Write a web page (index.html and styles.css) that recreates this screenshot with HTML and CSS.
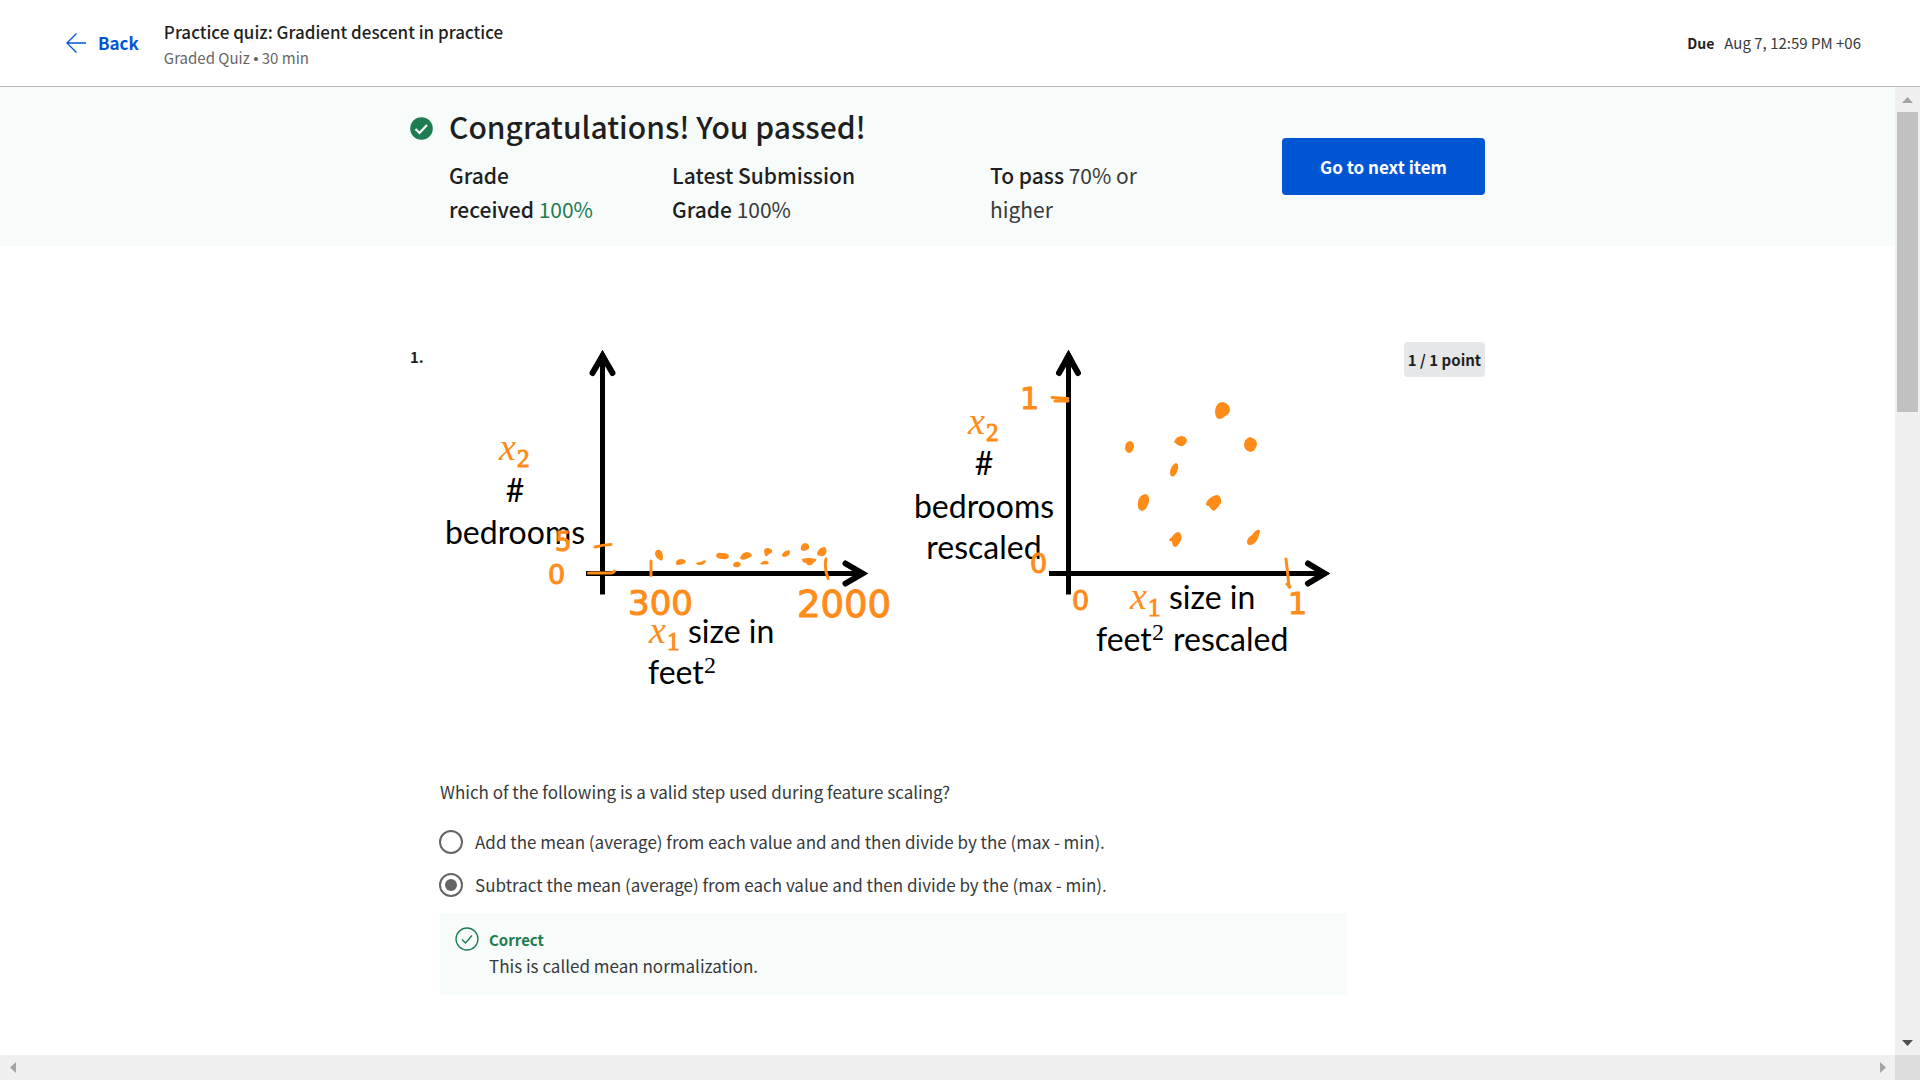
FILE: index.html
```html
<!DOCTYPE html>
<html lang="en">
<head>
<meta charset="utf-8">
<meta name="viewport" content="width=device-width, initial-scale=1">
<title>Practice quiz: Gradient descent in practice</title>
<link rel="stylesheet" href="styles.css">
</head>
<body>
<div class="app">
  <header class="topbar">
    <a class="back" href="#">
      <svg width="20" height="22" viewBox="0 0 20 22" aria-hidden="true"><path d="M10.500 1.500 1 11l9.500 9.500M1 11h19" fill="none" stroke="currentColor" stroke-width="1.300"/></svg>
      Back
    </a>
    <div class="topbar-info">
      <h1 class="quiz-title">Practice quiz: Gradient descent in practice</h1>
      <p class="quiz-meta">Graded Quiz <span class="bullet">•</span> 30 min</p>
    </div>
    <p class="due"><strong>Due</strong><span>Aug 7, 12:59 PM +06</span></p>
  </header>

  <div class="viewport">
    <main class="content">
      <section class="banner">
        <div class="banner-inner">
          <svg class="passed-icon" width="23" height="23" viewBox="0 0 23 23" aria-hidden="true"><circle cx="11.500" cy="11.500" r="11.300" fill="#1d7c50"/><path d="m5.500 12 4 4 7.500-8" fill="none" stroke="#fff" stroke-width="2.200"/></svg>
          <div class="result">
            <h2 class="result-title">Congratulations! You passed!</h2>
            <div class="grades">
              <p><b>Grade<br>received</b> <span class="good">100%</span></p>
              <p><b>Latest Submission<br>Grade</b> 100%</p>
              <p><b>To pass</b> 70% or<br>higher</p>
            </div>
          </div>
          <button class="next" type="button">Go to next item</button>
        </div>
      </section>

      <section class="question">
        <span class="number">1.</span>
        <div class="body">
          <svg class="figure" viewBox="440 340 907 360" role="img" aria-label="Number of bedrooms against size, before and after rescaling">
            <g class="words">
              <text x="515" y="502" text-anchor="middle">#</text>
              <text x="515" y="544" text-anchor="middle">bedrooms</text>
              <text x="688" y="643">size in</text>
              <text x="648" y="684">feet</text>
              <text x="984" y="475" text-anchor="middle">#</text>
              <text x="984" y="518" text-anchor="middle">bedrooms</text>
              <text x="984" y="559" text-anchor="middle">rescaled</text>
              <text x="1169" y="609">size in</text>
              <text x="1096" y="651">feet</text>
              <text x="1173" y="651">rescaled</text>
            </g>
            <g class="power">
              <text x="704" y="673">2</text>
              <text x="1152" y="640">2</text>
            </g>
            <g class="axis">
              <path d="M602.500 356v238.500M586 573.500h274"/>
              <path d="M1068.500 356v238.500M1049 573.500h274"/>
            </g>
            <g class="heads">
              <path d="M592.500 373l10-17 10 17M845.500 563.500l17 10-17 10M1059 373l9.500-17 9.500 17M1308 563.500l16.500 10-16.500 10"/>
            </g>
            <g class="tips">
              <path d="m602.500 350 5 9h-10zM867.500 573.500l-9 5v-10zM1068.500 350l5 9h-10zM1330 573.500l-9 5v-10z"/>
            </g>
            <g class="var">
              <text x="499" y="460">x<tspan class="sub" dx="1" dy="7">2</tspan></text>
              <text x="649" y="643">x<tspan class="sub" dx="1" dy="7">1</tspan></text>
              <text x="968" y="434">x<tspan class="sub" dx="1" dy="7">2</tspan></text>
              <text x="1130" y="609">x<tspan class="sub" dx="1" dy="7">1</tspan></text>
            </g>
            <g class="ticks">
              <path d="M595 547q7-2 16-2.500M588.500 573h21q4 0 5-2M651 561v14.500M826 559q-2 9 2 19.500"/>
              <path d="M1052 397.500l16 1M1055 401h13M1286 559l2 17 1 11M1287 584l3 3"/>
            </g>
            <g class="ink">
              <text x="555" y="551" font-size="26">5</text>
              <text x="548" y="584" font-size="27">0</text>
              <text x="628" y="615" font-size="34">300</text>
              <text x="797" y="617" font-size="37">2000</text>
              <text x="1020" y="409" font-size="30">1</text>
              <text x="1030" y="573" font-size="27">0</text>
              <text x="1072" y="610" font-size="27">0</text>
              <text x="1288" y="614" font-size="30">1</text>
            </g>
            <g class="dots">
              <path d="M655 553q1-4 5-3 3 2 3 8-1 4-3 2-5-2-5-7zM676 562q1-3 6-3 5 1 3 4-3 2-7 2-3 0-2-3zM696 563q2-1 5-1 3-3 5-1-1 3-5 4-5 0-5-2zM716 555q1-3 6-2 6 0 7 3-1 4-6 3-7 0-7-4zM733 565q1-4 6-3 3 2 1 4-2 2-5 1-2 0-2-2zM740 558q2-6 7-6 5 1 5 4-3 2-6 3-5 2-6-1zM764 551q0-3 4-3 5 1 4 4-2 2-4 3-1 2-3 1zM760 564q3-4 7-3 3 2 1 3-5 1-8 0zM782 555q1-4 7-5 2 2 0 5-3 2-5 2-2 0-2-2zM801 550q-1-6 4-7 5 1 4 5-2 3-6 3zM817 553q2-6 8-6 3 4 0 8-3 2-4 1-4 0-4-3zM802 559q6-2 14 0 1 2-2 3-2 4-6 3-1 0-2-2-4 0-4-4z"/>
              <path d="M1215 411q1-9 8-9 7 2 7 8-1 5-5 6-2 3-6 3-4-1-4-8zM1125 448q0-6 5-7 4 1 4 5-1 7-5 7-4-1-4-5zM1174 442q2-6 8-6 5 1 5 5-2 6-7 5-3-1-6-4zM1244 445q0-6 6-8 7 2 7 7-1 7-7 8-6-2-6-7zM1170 472q1-7 6-9 4 1 1 9-3 6-6 4-1-1-1-4zM1138 503q0-7 7-9 5 1 4 8-3 9-7 9-5-1-4-8zM1206 504q0-3 3-5 4-4 9-4 4 3 3 8-3 5-7 8-3-1-5-5-3 0-3-2zM1169 540q1-2 3-3 3-5 7-5 4 3 2 8-3 7-6 7-3-1-3-6-2 1-3-1zM1247 542q0-4 5-7 4-6 8-5-1 7-3 10-3 5-7 5-3 0-3-3z"/>
            </g>
          </svg>
          <form>
            <fieldset class="choices">
              <legend class="prompt">Which of the following is a valid step used during feature scaling?</legend>
              <label class="choice"><input type="radio" name="step"><span>Add the mean (average) from each value and and then divide by the (max - min).</span></label>
              <label class="choice"><input type="radio" name="step" checked><span>Subtract the mean (average) from each value and then divide by the (max - min).</span></label>
            </fieldset>
          </form>
          <div class="feedback">
            <svg width="24" height="24" viewBox="0 0 24 24" fill="none" stroke="#1d7c50" stroke-width="1.300" aria-hidden="true"><circle cx="12" cy="12" r="11"/><path d="m7 12.500 3.500 3.500L17 8.500"/></svg>
            <div>
              <p class="feedback-title">Correct</p>
              <p>This is called mean normalization.</p>
            </div>
          </div>
        </div>
        <span class="points">1 / 1 point</span>
      </section>
    </main>

    <div class="bar bar-v">
      <button type="button" aria-label="Scroll up"><svg width="11" height="6" viewBox="0 0 11 6"><path d="M0 6 5.500 0 11 6z" fill="#a3a3a3"/></svg></button>
      <div class="thumb"></div>
      <button type="button" aria-label="Scroll down"><svg width="11" height="6" viewBox="0 0 11 6"><path d="m0 0 5.500 6L11 0z" fill="#505050"/></svg></button>
    </div>
    <div class="bar bar-h">
      <button type="button" aria-label="Scroll left"><svg width="6" height="11" viewBox="0 0 6 11"><path d="M6 0 0 5.500 6 11z" fill="#a3a3a3"/></svg></button>
      <button type="button" aria-label="Scroll right"><svg width="6" height="11" viewBox="0 0 6 11"><path d="m0 0 6 5.500L0 11z" fill="#a3a3a3"/></svg></button>
    </div>
    <div class="corner"></div>
  </div>
</div>
</body>
</html>
```
FILE: styles.css
```css
* {
  box-sizing: border-box;
}

body {
  margin: 0;
  background: #fff;
  color: #373a3c;
  font: 400 17px/26px "Noto Sans CJK SC", "Noto Sans", sans-serif;
}

h1, h2, p {
  margin: 0;
}

button {
  border: 0;
  padding: 0;
  font-family: inherit;
  cursor: pointer;
}

.app {
  display: flex;
  flex-direction: column;
  height: 100vh;
}

/* Top bar */

.topbar {
  display: flex;
  align-items: center;
  padding: 15px 59px 15px 66px;
  border-bottom: 1px solid #bbb;
}

.back {
  display: flex;
  align-items: center;
  gap: 12px;
  margin-right: 25px;
  color: #0056d2;
  font-weight: 700;
  text-decoration: none;
}

.topbar-info {
  flex: 1;
  padding-top: 4px;
}

.quiz-title {
  color: #1f1f1f;
  font-size: 17px;
  font-weight: 500;
  line-height: 26px;
}

.quiz-meta {
  color: #666;
  font-size: 15px;
}

.bullet {
  font-family: "Liberation Sans", sans-serif;
  line-height: 1;
}

.due {
  display: flex;
  gap: 10px;
  font-size: 15px;
}

.due strong {
  color: #1f1f1f;
  font-size: 14px;
}

/* Scrolling area */

.viewport {
  flex: 1;
  min-height: 0;
  display: grid;
  grid-template: minmax(0, 1fr) 25px / minmax(0, 1fr) 25px;
}

.content {
  overflow: hidden;
}

.bar {
  display: flex;
  background: #f0f0f0;
}

.bar button {
  display: grid;
  place-items: center;
  flex: none;
  width: 25px;
  height: 25px;
  background: none;
}

.bar-v {
  flex-direction: column;
}

.bar-v button:last-child {
  margin-top: auto;
}

.bar-h {
  justify-content: space-between;
}

.thumb {
  height: 31%;
  margin: 0 2px;
  background: #c1c1c1;
}

.corner {
  background: #dcdcdc;
}

/* Result banner */

.banner {
  background: #f7fbfa;
}

.banner-inner {
  display: flex;
  align-items: center;
  max-width: 1075px;
  margin: 0 auto;
  padding: 19px 0 20px;
}

.passed-icon {
  flex: none;
  align-self: flex-start;
  margin: 11px 16px 0 0;
}

.result {
  flex: 1;
}

.result-title {
  margin-bottom: 12px;
  color: #1f1f1f;
  font-size: 30px;
  font-weight: 500;
  line-height: 40px;
}

.grades {
  display: grid;
  grid-template-columns: 223px 318px 1fr;
  font-size: 21px;
  line-height: 34px;
}

.grades b {
  color: #1f1f1f;
  font-weight: 500;
}

.good {
  color: #1d7c50;
}

.next {
  width: 203px;
  height: 57px;
  border-radius: 4px;
  background: #0056d2;
  color: #fff;
  font-size: 17px;
  font-weight: 700;
}

/* Question */

.question {
  display: grid;
  grid-template-columns: 30px minmax(0, 1fr) 81px;
  align-items: start;
  max-width: 1075px;
  margin: 0 auto;
  padding: 94px 0 60px;
}

.number {
  color: #1f1f1f;
  font-size: 15px;
  font-weight: 700;
  line-height: 34px;
}

.body {
  margin-right: 57px;
}

.points {
  margin-top: 2px;
  border-radius: 4px;
  background: #e5e7e8;
  color: #1f1f1f;
  font-size: 15px;
  font-weight: 700;
  line-height: 35px;
  text-align: center;
  white-space: nowrap;
}

.figure {
  display: block;
  width: 100%;
  margin-bottom: 78px;
  overflow: visible;
}

.words {
  font: 32px Lato, sans-serif;
}

.power {
  font: 24px "Liberation Serif", serif;
}

.axis,
.heads {
  fill: none;
  stroke: #000;
  stroke-width: 5px;
}

.heads {
  stroke-width: 6px;
  stroke-linecap: round;
}

.var {
  fill: #ff8c1a;
  font: italic 38px "Liberation Serif", serif;
}

.sub {
  font-size: 25px;
  font-style: normal;
  stroke: #ff8c1a;
}

.ticks {
  fill: none;
  stroke: #ff8c1a;
  stroke-width: 3px;
  stroke-linecap: round;
}

.ink {
  fill: #ff8c1a;
  stroke: #ff8c1a;
  font-family: "DejaVu Sans", sans-serif;
}

.dots {
  fill: #ff8c1a;
}

.choices {
  margin: 0;
  border: 0;
  padding: 0;
}

.prompt {
  margin-bottom: 14px;
  padding: 0;
  line-height: 28px;
}

.choice {
  display: flex;
  align-items: center;
  gap: 12px;
  min-height: 43px;
  margin-left: -1px;
}

.choice input {
  appearance: none;
  flex: none;
  display: grid;
  place-items: center;
  width: 24px;
  height: 24px;
  margin: 0;
  border: 2px solid #666;
  border-radius: 50%;
}

.choice input:checked::before {
  content: "";
  width: 12px;
  height: 12px;
  border-radius: 50%;
  background: #666;
}

.feedback {
  display: flex;
  gap: 10px;
  margin-top: 7px;
  padding: 14px 15px 16px;
  background: #f7fbfa;
}

.feedback-title {
  color: #1d7c50;
  font-size: 15px;
  font-weight: 700;
}
```
